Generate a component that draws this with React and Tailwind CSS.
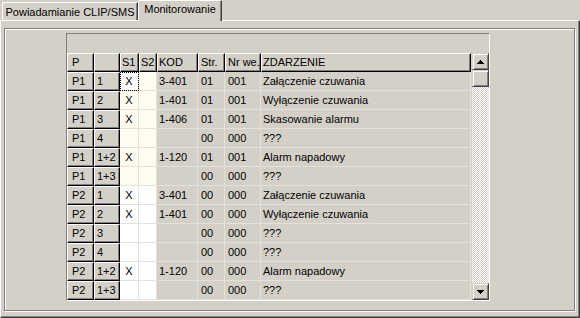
import React from "react";

const rows = [
  ["P1", "1", true, "3-401", "01", "001", "Załączenie czuwania"],
  ["P1", "2", true, "1-401", "01", "001", "Wyłączenie czuwania"],
  ["P1", "3", true, "1-406", "01", "001", "Skasowanie alarmu"],
  ["P1", "4", false, "", "00", "000", "???"],
  ["P1", "1+2", true, "1-120", "01", "001", "Alarm napadowy"],
  ["P1", "1+3", false, "", "00", "000", "???"],
  ["P2", "1", true, "3-401", "00", "000", "Załączenie czuwania"],
  ["P2", "2", true, "1-401", "00", "000", "Wyłączenie czuwania"],
  ["P2", "3", false, "", "00", "000", "???"],
  ["P2", "4", false, "", "00", "000", "???"],
  ["P2", "1+2", true, "1-120", "00", "000", "Alarm napadowy"],
  ["P2", "1+3", false, "", "00", "000", "???"],
];

const fixed =
  "h-[19px] bg-[#d4d0c8] border-t border-l border-r border-b border-t-white border-l-white border-r-black border-b-black shadow-[inset_-1px_-1px_0_#808080] leading-[17px] whitespace-nowrap overflow-hidden";
const data =
  "h-[19px] border-r border-b border-[#e4e1da] pt-[1px] leading-[17px] whitespace-nowrap overflow-hidden";

function Arrow({ down }) {
  return (
    <svg width="7" height="4" viewBox="0 0 7 4" shapeRendering="crispEdges">
      {down ? (
        <g fill="#000">
          <rect x="0" y="0" width="7" height="1" />
          <rect x="1" y="1" width="5" height="1" />
          <rect x="2" y="2" width="3" height="1" />
          <rect x="3" y="3" width="1" height="1" />
        </g>
      ) : (
        <g fill="#000">
          <rect x="3" y="0" width="1" height="1" />
          <rect x="2" y="1" width="3" height="1" />
          <rect x="1" y="2" width="5" height="1" />
          <rect x="0" y="3" width="7" height="1" />
        </g>
      )}
    </svg>
  );
}

const btn =
  "h-[17px] w-[17px] shrink-0 bg-[#d4d0c8] border border-t-[#d4d0c8] border-l-[#d4d0c8] border-r-[#404040] border-b-[#404040] shadow-[inset_1px_1px_0_#fff,inset_-1px_-1px_0_#808080] flex items-center justify-center";

export default function App() {
  return (
    <div className="w-[580px] h-[318px] bg-[#d4d0c8] flex flex-col font-['Liberation_Sans',Arial,sans-serif] text-[11px] text-black overflow-hidden">
      {/* tab strip */}
      <div className="h-[20px] shrink-0 flex items-end pl-[2px]">
        <div className="h-[18px] w-[136px] border-t border-l border-r border-t-white border-l-white border-r-[#404040] shadow-[inset_-1px_0_0_#808080] rounded-tl-[2px] text-center leading-[15px] pt-[2px] whitespace-nowrap">
          Powiadamianie CLIP/SMS
        </div>
        <div className="relative z-10 h-[21px] w-[84px] -mb-px bg-[#d4d0c8] border-t border-l border-r border-t-white border-l-white border-r-[#404040] shadow-[inset_-1px_0_0_#808080] rounded-tl-[2px] text-center leading-[15px] pt-[1px] whitespace-nowrap">
          Monitorowanie
        </div>
      </div>

      {/* panel */}
      <div className="flex-1 flex flex-col border-t border-l border-r border-b border-t-white border-l-white border-r-[#404040] border-b-[#404040] shadow-[inset_-1px_-1px_0_#808080] pl-[3px] pt-[7px] pr-[4px] pb-[6px]">
        <div className="flex-1 border border-[#808080] shadow-[inset_1px_1px_0_#fff,1px_1px_0_#fff] pl-[61px] pt-[4px]">
          {/* grid widget */}
          <div className="w-[424px] h-[268px] flex flex-col border border-t-[#808080] border-l-[#808080] border-r-white border-b-white">
            <div className="h-[19px] shrink-0" />
            <div className="flex flex-1">
              <div className="w-[405px] grid grid-cols-[27px_26px_19px_18px_41px_27px_36px_210px] content-start">
                <div className={fixed + " pl-[4px]"}>P</div>
                <div className={fixed + " pl-[2px]"}></div>
                <div className={fixed + " pl-[1px]"}>S1</div>
                <div className={fixed + " pl-[1px]"}>S2</div>
                <div className={fixed + " pl-[1px]"}>KOD</div>
                <div className={fixed + " pl-[2px]"}>Str.</div>
                <div className={fixed + " pl-[2px]"}>Nr we.</div>
                <div className={fixed + " pl-[1px]"}>ZDARZENIE</div>
                {rows.map((r, i) => {
                  const p1 = r[0] === "P1";
                  return (
                    <React.Fragment key={i}>
                      <div className={fixed + " pl-[4px]"}>{r[0]}</div>
                      <div className={fixed + " pl-[2px]"}>{r[1]}</div>
                      <div
                        className={
                          data +
                          " text-center " +
                          (i === 0
                            ? "bg-white outline-1 outline-dotted outline-black outline-offset-[-1px]"
                            : p1
                            ? "bg-[#fffcf0]"
                            : "bg-white")
                        }
                      >
                        {r[2] ? "X" : ""}
                      </div>
                      <div className={data + (p1 ? " bg-[#fffcf0]" : " bg-white")}></div>
                      <div className={data + " pl-[2px]"}>{r[3]}</div>
                      <div className={data + " pl-[3px]"}>{r[4]}</div>
                      <div className={data + " pl-[3px]"}>{r[5]}</div>
                      <div className={data + " pl-[2px]"}>{r[6]}</div>
                    </React.Fragment>
                  );
                })}
              </div>
              {/* scrollbar */}
              <div className="w-[17px] flex flex-col">
                <div className={btn}>
                  <Arrow />
                </div>
                <div className={btn}></div>
                <div className="flex-1 bg-[image:repeating-conic-gradient(#ffffff_0_25%,#d4d0c8_0_50%)] bg-size-[2px_2px]" />
                <div className={btn}>
                  <Arrow down />
                </div>
              </div>
            </div>
          </div>
        </div>
      </div>
    </div>
  );
}
